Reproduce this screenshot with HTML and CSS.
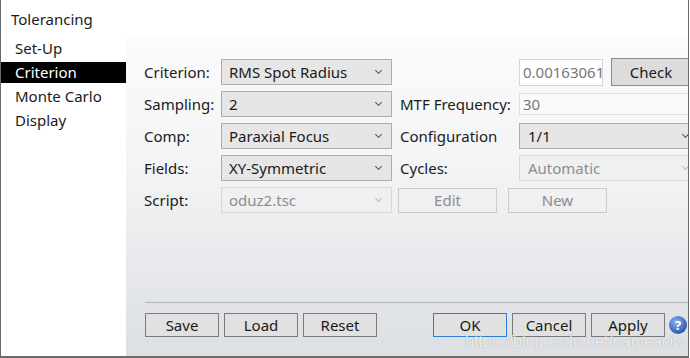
FILE: index.html
```html
<!DOCTYPE html>
<html lang="en">
<head>
  <meta charset="UTF-8">
  <title>Tolerancing</title>
  <link rel="stylesheet" href="styles.css">
</head>
<body>

  <div class="window">
    <div class="title">Tolerancing</div>

    <div class="main">
      <ul class="nav">
        <li>Set-Up</li>
        <li class="active">Criterion</li>
        <li>Monte Carlo</li>
        <li>Display</li>
      </ul>

      <div class="panel">
        <div class="form">
          <div class="label">Criterion:</div>
          <div class="select">RMS Spot Radius</div>
          <div></div>
          <div class="pair">
            <div class="input value">0.00163061</div>
            <div class="btn check">Check</div>
          </div>

          <div class="label">Sampling:</div>
          <div class="select">2</div>
          <div class="label label2">MTF Frequency:</div>
          <div class="input mtf">30</div>

          <div class="label">Comp:</div>
          <div class="select">Paraxial Focus</div>
          <div class="label label2">Configuration</div>
          <div class="select wide">1/1</div>

          <div class="label">Fields:</div>
          <div class="select">XY-Symmetric</div>
          <div class="label label2">Cycles:</div>
          <div class="select wide disabled">Automatic</div>

          <div class="label">Script:</div>
          <div class="select disabled">oduz2.tsc</div>
          <div class="pair script-btns">
            <div class="btn disabled">Edit</div>
            <div class="btn disabled">New</div>
          </div>
        </div>

        <div class="footer">
          <div class="sep"></div>
          <div class="buttons">
            <div class="group">
              <div class="btn">Save</div>
              <div class="btn">Load</div>
              <div class="btn">Reset</div>
            </div>
            <div class="group right">
              <div class="btn default">OK</div>
              <div class="btn">Cancel</div>
              <div class="btn">Apply</div>
              <div class="help">?</div>
            </div>
          </div>
        </div>
      </div>
    </div>

    <div class="watermark">https://blog.csdn.net/nameacity</div>
  </div>

</body>
</html>
```

FILE: styles.css
```css
/* general */
* { box-sizing: border-box; margin: 0; padding: 0; }
body {
  font-family: 'Noto Sans', 'Open Sans', sans-serif;
  font-size: 15px;
  color: #1a1a1a;
  background: #fff;
}

/* window */
.window {
  position: relative;
  width: 689px;
  height: 358px;
  background: #fff;
  border-left: 1px solid #6b6b6b;
  border-right: 1px solid #6b6b6b;
  border-bottom: 2px solid #6b6b6b;
  display: flex;
  flex-direction: column;
  overflow: hidden;
}
.title {
  height: 38px;
  line-height: 38px;
  padding-left: 10px;
}
.main {
  flex: 1;
  display: flex;
  min-height: 0;
}

/* left nav */
.nav {
  list-style: none;
  width: 125px;
  display: flex;
  flex-direction: column;
  gap: 3px;
}
.nav li {
  height: 21px;
  line-height: 21px;
  padding-left: 14px;
}
.nav li.active {
  background: #000;
  color: #fff;
}

/* right panel */
.panel {
  flex: 1;
  display: flex;
  flex-direction: column;
  justify-content: space-between;
  background: linear-gradient(#fbfbfc, #f3f4f5 40%, #dcdfe3);
  overflow: hidden;
}
.form {
  display: grid;
  grid-template-columns: 77px 171px 127px 180px;
  grid-auto-rows: 26px;
  row-gap: 6px;
  padding: 21px 0 0 18px;
  align-items: center;
}
.label2 { padding-left: 8px; }
.label { white-space: nowrap; }

.select {
  position: relative;
  height: 26px;
  line-height: 24px;
  padding-left: 7px;
  background: #e6e6e6;
  border: 1px solid #adadad;
  white-space: nowrap;
}
.select::after {
  content: '';
  position: absolute;
  right: 10px;
  top: 8px;
  width: 4px;
  height: 4px;
  border-right: 1px solid #555;
  border-bottom: 1px solid #555;
  transform: rotate(45deg);
}
.select.wide { padding-left: 8px; }
.select.disabled {
  background: #eff0f1;
  border-color: #d5d7d9;
  color: #8d8d8d;
}
.select.disabled::after { border-color: #bbb; }

.pair {
  display: flex;
  align-items: center;
  gap: 8px;
}
.pair > * { flex-shrink: 0; }
.input {
  background: #fff;
  border: 1px solid #d2d4d6;
  color: #777;
  white-space: nowrap;
  overflow: hidden;
}
.input.value {
  width: 84px;
  height: 27px;
  line-height: 25px;
  padding-left: 3px;
}
.input.mtf {
  height: 22px;
  line-height: 20px;
  padding-left: 3px;
  background: #fafafa;
  border-color: #dcdee0;
}

/* buttons */
.btn {
  width: 74px;
  height: 24px;
  line-height: 22px;
  text-align: center;
  background: #e1e1e1;
  border: 1px solid #7a7a7a;
}
.btn.check {
  width: 80px;
  height: 28px;
  line-height: 26px;
  background: #dcdcdc;
  border-color: #8a8a8a;
}
.btn.default { border-color: #2b7fd8; }
.btn.disabled {
  width: 99px;
  height: 25px;
  line-height: 23px;
  background: transparent;
  border-color: #c9cbcd;
  color: #8d8d8d;
}
.script-btns {
  grid-column: span 2;
  padding-left: 6px;
  gap: 11px;
}

/* footer */
.footer {
  padding: 0 0 19px 19px;
}
.sep {
  height: 1px;
  background: #a9b7c4;
}
.buttons {
  display: flex;
  align-items: center;
  margin-top: 10px;
}
.group {
  display: flex;
  align-items: center;
  gap: 5px;
}
.group.right {
  margin-left: 56px;
}
.help {
  width: 18px;
  height: 18px;
  border-radius: 50%;
  background: radial-gradient(circle at 40% 35%, #8fb4ec, #2a5cb8 70%, #1c3f8a);
  color: #fff;
  font-weight: bold;
  font-size: 13px;
  line-height: 18px;
  text-align: center;
  margin-left: -1px;
}

/* watermark over the buttons */
.watermark {
  position: absolute;
  left: 464px;
  top: 333px;
  font-family: 'Liberation Sans', sans-serif;
  font-size: 16px;
  color: rgba(255, 255, 255, 0.85);
  text-shadow: 0 0 1px rgba(0, 0, 0, 0.35);
}
```
